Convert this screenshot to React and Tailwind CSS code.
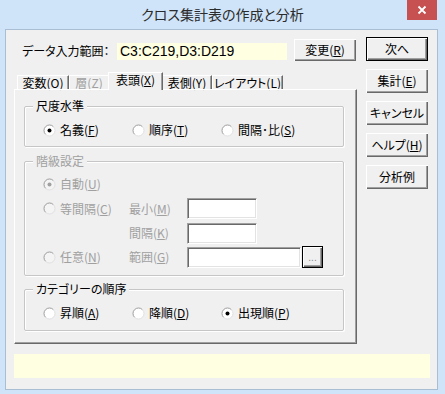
import React from "react";

function U({ children }) {
  return <span className="underline underline-offset-[1px]">{children}</span>;
}

function Radio({ checked, disabled }) {
  return (
    <svg width="13" height="13" viewBox="0 0 13 13" className="shrink-0">
      <circle cx="6.5" cy="6.5" r="5.5" fill={disabled ? "#f4f4f4" : "#ffffff"} />
      <path d="M2.61 10.39 A5.5 5.5 0 0 1 10.39 2.61" fill="none" stroke="#9c9c9c" strokeWidth="1" />
      <path d="M10.39 2.61 A5.5 5.5 0 0 1 2.61 10.39" fill="none" stroke="#e0e0e0" strokeWidth="1" />
      {checked && <circle cx="6.5" cy="6.5" r="2" fill={disabled ? "#a0a0a0" : "#000000"} />}
    </svg>
  );
}

function RadioItem({ checked, disabled, children, className = "" }) {
  return (
    <div className={`flex items-center gap-[4px] ${className}`}>
      <Radio checked={checked} disabled={disabled} />
      <span className={`leading-[16px] ${disabled ? "text-[#a0a0a0]" : "text-black"}`}>{children}</span>
    </div>
  );
}

function Btn({ children, def = false, className = "" }) {
  const base = "flex items-center justify-center bg-[#f0f0f0] text-black leading-[16px]";
  const normal = "shadow-[inset_1px_1px_0_#ffffff,inset_-1px_-1px_0_#696969,inset_-2px_-2px_0_#a0a0a0]";
  const dflt = "border border-black shadow-[inset_1px_1px_0_#ffffff,inset_-1px_-1px_0_#696969,inset_-2px_-2px_0_#a0a0a0]";
  return <div className={`${base} ${def ? dflt : normal} ${className}`}>{children}</div>;
}

function Field({ className = "" }) {
  return (
    <div
      className={`bg-white border border-t-[#a0a0a0] border-l-[#a0a0a0] border-r-white border-b-white shadow-[inset_1px_1px_0_#696969,inset_-1px_-1px_0_#e3e3e3] ${className}`}
    />
  );
}

function Group({ label, disabled = false, className = "", children }) {
  return (
    <div className={`relative w-[320px] border border-[#c6c6c6] rounded-[2px] shadow-[inset_1px_1px_0_#ffffff,1px_1px_0_#ffffff] ${className}`}>
      <span
        className={`absolute left-[8px] -top-[9px] px-[3px] bg-[#f0f0f0] leading-[16px] ${disabled ? "text-[#a0a0a0]" : "text-black"}`}
      >
        {label}
      </span>
      {children}
    </div>
  );
}

function Tab({ children, className = "", disabled = false }) {
  return (
    <div
      className={`flex items-center justify-center h-[14px] leading-[14px] ${disabled ? "text-[#a0a0a0]" : "text-black"} ${className}`}
    >
      {children}
    </div>
  );
}

export default function App() {
  return (
    <div className="w-[445px] h-[394px] bg-[#cfe4f8] flex flex-col font-['Noto_Sans_CJK_JP','Noto_Sans_CJK_SC',sans-serif] text-[12px] [font-feature-settings:'palt'] overflow-hidden">
      {/* Title bar */}
      <div className="relative h-[29px] flex items-center justify-center">
        <span className="text-[14px] text-[#2b2b2b] leading-[20px] -mt-[1px]">クロス集計表の作成と分析</span>
        <div className="absolute right-[8px] top-0 w-[30px] h-[20px] bg-[#c75050] flex items-center justify-center">
          <svg width="10" height="10" viewBox="0 0 10 10">
            <path d="M1.5 1.5 L8.5 8.5 M8.5 1.5 L1.5 8.5" stroke="#ffffff" strokeWidth="1.8" />
          </svg>
        </div>
      </div>

      {/* Client area */}
      <div className="ml-[5px] w-[433px] h-[361px] border border-[#a9bdd3] bg-[#f0f0f0] flex flex-col">
        <div className="flex">
          {/* Left column */}
          <div className="ml-[8px] w-[343px] flex flex-col pt-[9px]">
            <div className="flex h-[22px] items-start">
              <span className="ml-[8px] w-[95px] mt-[4px] leading-[16px] text-black whitespace-nowrap">データ入力範囲：</span>
              <div className="w-[170px] h-[17px] mt-[4px] bg-[#ffffe1] flex items-center pl-[3px] font-['Liberation_Sans',sans-serif] text-[14px] text-black leading-[17px]">
                C3:C219,D3:D219
              </div>
              <Btn className="ml-[7px] w-[62px] h-[22px]">
                変更(<U>R</U>)
              </Btn>
            </div>

            {/* Tabs */}
            <div className="mt-[11px] h-[17px] flex items-end pl-[3px]">
              <Tab className="w-[52px] border-t border-l border-t-white border-l-white border-r border-r-[#696969] shadow-[inset_-1px_0_0_#a0a0a0]">
                変数(<U>O</U>)
              </Tab>
              <Tab disabled className="w-[39px] border-t border-l border-t-white border-l-white">
                層(<U>Z</U>)
              </Tab>
              <div className="relative z-10 -mb-[1px] w-[55px] h-[18px] bg-[#f0f0f0] flex items-center justify-center pb-[3px] leading-[14px] text-black border-t border-l border-t-white border-l-white border-r border-r-[#696969] shadow-[inset_-1px_0_0_#a0a0a0]">
                表頭(<U>X</U>)
              </div>
              <Tab className="w-[49px] border-t border-t-white border-r border-r-[#696969] shadow-[inset_-1px_0_0_#a0a0a0]">
                表側(<U>Y</U>)
              </Tab>
              <Tab className="w-[71px] border-t border-l border-t-white border-l-white border-r border-r-[#696969] shadow-[inset_-1px_0_0_#a0a0a0]">
                レイアウト(<U>L</U>)
              </Tab>
            </div>

            {/* Panel */}
            <div className="h-[255px] border border-t-white border-l-white border-r-[#696969] border-b-[#696969] shadow-[inset_-1px_-1px_0_#a0a0a0] pl-[9px] pt-[16px] flex flex-col">
              <Group label="尺度水準" className="h-[41px] pt-[7px] pl-[18px] flex items-center">
                <RadioItem checked className="w-[89px]">
                  名義(<U>F</U>)
                </RadioItem>
                <RadioItem className="w-[89px]">
                  順序(<U>T</U>)
                </RadioItem>
                <RadioItem className="w-[100px]">
                  間隔･比(<U>S</U>)
                </RadioItem>
              </Group>

              <Group label="階級設定" disabled className="mt-[14px] h-[115px] pt-[10px] pl-[18px] flex flex-col">
                <div className="h-[24px] flex items-center">
                  <RadioItem checked disabled className="w-[86px]">
                    自動(<U>U</U>)
                  </RadioItem>
                </div>
                <div className="h-[25px] flex items-center">
                  <RadioItem disabled className="w-[86px]">
                    等間隔(<U>C</U>)
                  </RadioItem>
                  <span className="w-[58px] leading-[16px] text-[#a0a0a0]">
                    最小(<U>M</U>)
                  </span>
                  <Field className="w-[70px] h-[21px]" />
                </div>
                <div className="h-[24px] flex items-center">
                  <div className="w-[86px]" />
                  <span className="w-[58px] leading-[16px] text-[#a0a0a0]">
                    間隔(<U>K</U>)
                  </span>
                  <Field className="w-[70px] h-[21px]" />
                </div>
                <div className="h-[24px] flex items-center">
                  <RadioItem disabled className="w-[86px]">
                    任意(<U>N</U>)
                  </RadioItem>
                  <span className="w-[58px] leading-[16px] text-[#a0a0a0]">
                    範囲(<U>G</U>)
                  </span>
                  <Field className="w-[114px] h-[21px]" />
                  <div className="ml-[1px] w-[21px] h-[22px] border border-black bg-[#f0f0f0] shadow-[inset_1px_1px_0_#ffffff,inset_-1px_-1px_0_#696969,inset_-2px_-2px_0_#a0a0a0] flex items-center justify-center font-['Liberation_Sans',sans-serif] text-[10px] text-[#8a8a8a] leading-[10px] pt-[2px]">
                    ...
                  </div>
                </div>
              </Group>

              <Group label="カテゴリーの順序" className="mt-[13px] h-[42px] pt-[6px] pl-[18px] flex items-center">
                <RadioItem className="w-[89px]">
                  昇順(<U>A</U>)
                </RadioItem>
                <RadioItem className="w-[89px]">
                  降順(<U>D</U>)
                </RadioItem>
                <RadioItem checked className="w-[100px]">
                  出現順(<U>P</U>)
                </RadioItem>
              </Group>
            </div>
          </div>

          {/* Right column */}
          <div className="ml-[9px] w-[62px] pt-[7px] flex flex-col gap-[8px]">
            <Btn def className="h-[24px]">次へ</Btn>
            <Btn className="h-[24px]">
              集計(<U>E</U>)
            </Btn>
            <Btn className="h-[24px]">キャンセル</Btn>
            <Btn className="h-[24px]">
              ヘルプ(<U>H</U>)
            </Btn>
            <Btn className="h-[24px]">分析例</Btn>
          </div>
        </div>

        {/* Status bar */}
        <div className="mt-[10px] ml-[8px] w-[416px] h-[24px] bg-[#ffffe1]" />
      </div>
    </div>
  );
}
